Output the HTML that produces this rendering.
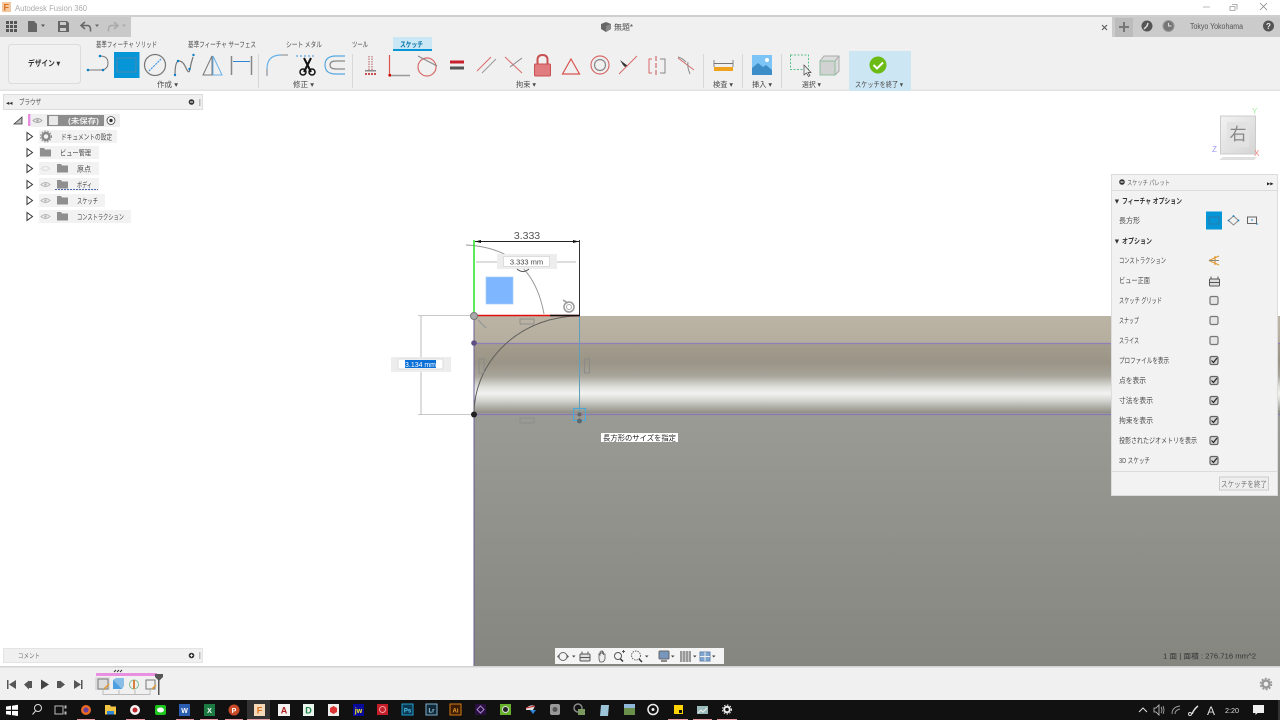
<!DOCTYPE html>
<html lang="ja"><head><meta charset="utf-8"><title>Autodesk Fusion 360</title>
<style>
html,body{margin:0;padding:0;width:1280px;height:720px;overflow:hidden;background:#fff}
svg{display:block;position:absolute;left:0;top:0;filter:blur(.3px)}
text{font-family:"Liberation Sans","Noto Sans CJK JP",sans-serif;font-size:7.5px;fill:#4a4a4a}
.c{text-anchor:middle}
.b{font-weight:bold}
</style></head><body>
<svg width="1280" height="720" viewBox="0 0 1280 720" xmlns="http://www.w3.org/2000/svg">
<defs>
<linearGradient id="band" x1="0" y1="0" x2="0" y2="1">
<stop offset="0" stop-color="#bbb4a4"/><stop offset=".27" stop-color="#b5ae9f"/><stop offset=".29" stop-color="#a49d8e"/><stop offset=".48" stop-color="#9a9486"/><stop offset=".62" stop-color="#a8a59b"/><stop offset=".73" stop-color="#dedfdb"/><stop offset=".8" stop-color="#f2f2f0"/><stop offset=".87" stop-color="#d4d4d0"/><stop offset="1" stop-color="#8e8e86"/>
</linearGradient>
<linearGradient id="floor" x1="0" y1="0" x2="0" y2="1"><stop offset="0" stop-color="#9b9b95"/><stop offset="1" stop-color="#85867f"/></linearGradient>
<linearGradient id="cube" x1="0" y1="0" x2="1" y2="1"><stop offset="0" stop-color="#f2f2f2"/><stop offset="1" stop-color="#d4d4d4"/></linearGradient>
</defs>

<!-- title bar -->
<rect width="1280" height="15" fill="#fff"/>
<rect x="2" y="2" width="9" height="10" fill="#f4c9a0"/><text x="3.500" y="10.500" class="b" style="font-size:9px;fill:#d9701c">F</text>
<text x="15" y="11" textLength="72" lengthAdjust="spacingAndGlyphs" style="font-size:8.500px;fill:#aaa">Autodesk Fusion 360</text>
<path d="M1203 7h7" stroke="#bbb" fill="none"/><path d="M1232 4.500h5v5M1230 6.500h5v4h-5z" stroke="#999" fill="none" stroke-width=".8"/><path d="M1260 3l7 7M1267 3l-7 7" stroke="#888" fill="none" stroke-width=".8"/>
<rect y="15" width="1280" height="2" fill="#cfcfcf"/>

<!-- tab bar -->
<rect y="17" width="1280" height="20" fill="#f0f0f0"/>
<rect y="17" width="131" height="20" fill="#c9c9c9"/>
<rect x="1112" y="17" width="168" height="20" fill="#cbcbcb"/>
<rect x="1115" y="18" width="18" height="19" fill="#bcbcbc"/>
<g fill="#555"><rect x="6" y="21" width="3" height="3"/><rect x="10" y="21" width="3" height="3"/><rect x="14" y="21" width="3" height="3"/><rect x="6" y="25" width="3" height="3"/><rect x="10" y="25" width="3" height="3"/><rect x="14" y="25" width="3" height="3"/><rect x="6" y="29" width="3" height="3"/><rect x="10" y="29" width="3" height="3"/><rect x="14" y="29" width="3" height="3"/></g>
<path d="M28 21h6l3 3v8h-9z" fill="#666"/><path d="M41 24.500h4l-2 2.500z" fill="#555"/>
<path d="M58 21h9l2 2v9H58z" fill="#666"/><rect x="60" y="22" width="6" height="3" fill="#ccc"/><rect x="60" y="28" width="6" height="3" fill="#ccc"/>
<path d="M85 22l-4 3.500 4 3.500M81.500 25.500h6q3 0 3 4v2" fill="none" stroke="#666" stroke-width="1.500"/><path d="M95 24.500h4l-2 2.500z" fill="#666"/>
<path d="M114 22l4 3.500-4 3.500M117.500 25.500h-6q-3 0-3 4v2" fill="none" stroke="#aaa" stroke-width="1.500"/><path d="M122 24.500h4l-2 2.500z" fill="#aaa"/>
<path d="M601 24l5-2 5 2v5l-5 3-5-3z" fill="#666"/><path d="M606 26v6l5-3v-5z" fill="#888"/>
<text x="614" y="30" textLength="19" lengthAdjust="spacingAndGlyphs" style="font-size:8px">無題*</text>
<path d="M1102 25l5 5M1107 25l-5 5" stroke="#555" stroke-width="1" fill="none"/>
<path d="M1124 22v10M1119 27h10" stroke="#777" stroke-width="2" fill="none"/>
<circle cx="1147" cy="26" r="5.500" fill="#555"/><path d="M1144 29l3-3 1-3" stroke="#ddd" stroke-width="1.500" fill="none"/>
<circle cx="1168.500" cy="26" r="5.500" fill="#777" stroke="#999"/><path d="M1168.500 23v3h3" stroke="#ddd" fill="none"/>
<text x="1190" y="29" textLength="53" lengthAdjust="spacingAndGlyphs" style="font-size:8px;fill:#555">Tokyo Yokohama</text>
<circle cx="1268.500" cy="26" r="5.500" fill="#555"/><text x="1268.500" y="29" class="c b" style="font-size:8px;fill:#eee">?</text>

<!-- toolbar -->
<rect y="37" width="1280" height="53" fill="#f0f0f0"/>
<rect y="89.500" width="1280" height="1.500" fill="#e2e2e2"/>
<text x="96" y="47" textLength="61" lengthAdjust="spacingAndGlyphs">基準フィーチャ ソリッド</text>
<text x="188" y="47" textLength="68" lengthAdjust="spacingAndGlyphs">基準フィーチャ サーフェス</text>
<text x="286" y="47" textLength="36" lengthAdjust="spacingAndGlyphs">シート メタル</text>
<text x="352" y="47" textLength="16" lengthAdjust="spacingAndGlyphs">ツール</text>
<rect x="393" y="37" width="39" height="14" fill="#c9e7f5"/><rect x="393" y="49" width="39" height="2" fill="#0696d7"/>
<text x="400" y="47" textLength="23" lengthAdjust="spacingAndGlyphs" class="b" style="fill:#0671a8">スケッチ</text>
<rect x="8.500" y="44.500" width="72" height="39" rx="3" fill="#f1f1f1" stroke="#dcdcdc"/>
<text x="28" y="66" textLength="32" lengthAdjust="spacingAndGlyphs" class="b" style="font-size:8px;fill:#333">デザイン ▾</text>

<!-- create icons -->
<path d="M88 70h12q8 0 8-7t-8-7" fill="none" stroke="#777"/><circle cx="88" cy="70" r="1.300" fill="#0b7fc8"/><circle cx="103" cy="70" r="1.300" fill="#0b7fc8"/><circle cx="100" cy="56" r="1.300" fill="#0b7fc8"/>
<rect x="114" y="52" width="25.500" height="26" fill="#0696d7"/><rect x="117" y="58" width="19" height="14" fill="none" stroke="#4a8bb0"/>
<circle cx="155" cy="65" r="10.500" fill="none" stroke="#777" stroke-width="1.200"/><path d="M149 71l12-12" stroke="#3d95e0" stroke-width="1.200" stroke-dasharray="2 1"/>
<path d="M175 75q0-14 4-14t7 7 4 1 3-12" fill="none" stroke="#777" stroke-width="1.200"/><circle cx="178" cy="61" r="1.200" fill="#0b7fc8"/><circle cx="189.500" cy="69" r="1.200" fill="#0b7fc8"/><circle cx="193.500" cy="55" r="1.200" fill="#0b7fc8"/><circle cx="175" cy="75" r="1.200" fill="#0b7fc8"/>
<path d="M203 75l9-19v19z" fill="none" stroke="#777"/><path d="M213 56l9 19h-9z" fill="none" stroke="#6ab2e8"/>
<path d="M231.500 56v19M251.500 56v19" stroke="#888" stroke-width="1.500"/><path d="M233 61.500h17" stroke="#2f86d6" stroke-width="1"/>
<text x="157" y="87" textLength="21" lengthAdjust="spacingAndGlyphs">作成 ▾</text>
<rect x="258" y="54" width="1" height="34" fill="#d8d8d8"/>
<path d="M267 75v-6q0-14 14-14" fill="none" stroke="#6ab2e8" stroke-width="1.200"/><path d="M281 55h7M267 69v7" stroke="#999" stroke-width="1.200"/>
<path d="M296 56h20" stroke="#3d95e0" stroke-dasharray="2 2"/><path d="M304 58l7 14M311 58l-7 14" stroke="#111" stroke-width="2"/><circle cx="303" cy="72" r="3" fill="none" stroke="#111" stroke-width="1.500"/><circle cx="312" cy="72" r="3" fill="none" stroke="#111" stroke-width="1.500"/>
<path d="M345 56h-9q-11 0-11 9t11 9h9" fill="none" stroke="#5aa8e0" stroke-width="1.200"/><path d="M345 61h-9q-6 0-6 4t6 4h9" fill="none" stroke="#888" stroke-width="1.200"/>
<text x="293" y="87" textLength="21" lengthAdjust="spacingAndGlyphs">修正 ▾</text>
<rect x="352" y="54" width="1" height="34" fill="#d8d8d8"/>

<!-- constraints -->
<path d="M369 56v14M372 56v14" stroke="#b05a5a" stroke-dasharray="1.500 1"/><rect x="365" y="70" width="11" height="1.500" fill="#888"/><path d="M365 74h11" stroke="#c85050" stroke-dasharray="2 1" stroke-width="2"/>
<path d="M389.500 55v20" stroke="#d9534f" stroke-width="1.200"/><path d="M390 75.500h20" stroke="#999" stroke-width="1.500"/><rect x="388.500" y="74" width="2.500" height="2.500" fill="#c00"/>
<circle cx="427" cy="67" r="9" fill="none" stroke="#d96a6a" stroke-width="1.200"/><path d="M418 56l19 10" stroke="#888"/>
<rect x="450" y="60.500" width="14" height="3" fill="#c8202c"/><rect x="450" y="66.500" width="14" height="3" fill="#555"/>
<path d="M477 71l14-14" stroke="#d96a6a" stroke-width="1"/><path d="M482 73l14-14" stroke="#999" stroke-width="1"/>
<path d="M505 57l17 16" stroke="#d96a6a"/><path d="M510 67l12-9" stroke="#888"/>
<rect x="534.500" y="64" width="16" height="12" rx="1" fill="#e07c80" stroke="#c85050"/><path d="M537.500 64v-4q0-5 5-5t5 5v4" fill="none" stroke="#c85050" stroke-width="2"/>
<path d="M571 59l8.500 15h-17z" fill="none" stroke="#d9534f" stroke-width="1.200"/>
<circle cx="600" cy="65" r="9" fill="none" stroke="#d96a6a" stroke-width="1.200"/><circle cx="600" cy="65" r="5.500" fill="none" stroke="#888" stroke-width="1.200"/>
<path d="M620 60l8 6-3 1-2-2z" fill="#333"/><path d="M619 74l18-18" stroke="#d96a6a"/>
<path d="M652 59h-3v14h3" stroke="#d96a6a" fill="none"/><path d="M660 59h5v14h-5" stroke="#888" fill="none"/><path d="M656 56v21" stroke="#c85050" stroke-dasharray="5 2"/>
<path d="M678 58l16 12" stroke="#d96a6a"/><path d="M688 62q-1 5 2 12" stroke="#888" fill="none"/><path d="M678 57q4 1 8 5" stroke="#888" fill="none"/>
<text x="516" y="87" textLength="20" lengthAdjust="spacingAndGlyphs">拘束 ▾</text>
<rect x="703" y="54" width="1" height="34" fill="#d8d8d8"/>
<path d="M714 60v7M733 60v7" stroke="#888"/><path d="M714 63.500h19" stroke="#777"/><rect x="714" y="67" width="19" height="4" fill="#efa21e"/>
<text x="713" y="87" textLength="20" lengthAdjust="spacingAndGlyphs">検査 ▾</text>
<rect x="742" y="54" width="1" height="34" fill="#d8d8d8"/>
<rect x="752" y="55" width="20" height="20" fill="#7cc4f5"/><path d="M752 75v-7l6-5 5 4 3-2 6 5v5z" fill="#3d8ec8"/><circle cx="767" cy="60" r="2" fill="#fff"/>
<text x="752" y="87" textLength="20" lengthAdjust="spacingAndGlyphs">挿入 ▾</text>
<rect x="781" y="54" width="1" height="34" fill="#d8d8d8"/>
<rect x="790.500" y="55" width="18" height="14.500" fill="none" stroke="#5cc08a" stroke-dasharray="2 1.500"/>
<path d="M804 65v10l2.500-2 2 3.500 1.500-1-2-3h3z" fill="#eee" stroke="#444" stroke-width=".7"/>
<path d="M820 61l4-5h15v15l-4 4h-15z" fill="#ddd" stroke="#aaa"/><rect x="820" y="61" width="15" height="14" fill="#d2d2d2" stroke="#8fbf9f"/><path d="M835 61l4-5" stroke="#aaa"/>
<text x="802" y="87" textLength="19" lengthAdjust="spacingAndGlyphs">選択 ▾</text>
<rect x="849" y="51" width="62" height="40" fill="#cce6f4"/>
<circle cx="878" cy="65" r="8.500" fill="#6cbb14"/><path d="M873.500 65l3.500 3.500 6-6" stroke="#fff" stroke-width="2" fill="none"/>
<text x="855" y="87" textLength="48" lengthAdjust="spacingAndGlyphs">スケッチを終了 ▾</text>

<!-- canvas -->
<rect y="91" width="1280" height="575" fill="#fff"/>
<rect x="474" y="316" width="806" height="97" fill="url(#band)"/>
<rect x="474" y="413" width="806" height="253" fill="url(#floor)"/>
<!-- sketch lines -->
<path d="M474 343.500h806" stroke="#8f7fb8" stroke-width="1.200"/><path d="M474 414.500h806" stroke="#8678b0" stroke-width="1.200"/>
<path d="M474 240v426" stroke="#6b5c96" stroke-width="1"/>
<path d="M474 414A105 98 0 0 1 579 316" fill="none" stroke="#5f5f5a" stroke-width="1"/>
<path d="M466 245Q532 248 544 314" fill="none" stroke="#999" stroke-width="1"/>
<path d="M579.500 316v99" stroke="#5f9fbd" stroke-width="1"/>
<path d="M474 240v76" stroke="#27e227" stroke-width="1.500"/>
<path d="M474 315.500h105" stroke="#e01010" stroke-width="1.500"/><path d="M550 315.500h30" stroke="#111" stroke-width="1.500"/>
<path d="M579.500 240v75" stroke="#333" stroke-width="1"/>
<path d="M475 241.500h104" stroke="#222" stroke-width="1"/><path d="M475 241.500l6-1.500v3zM579 241.500l-6-1.500v3z" fill="#111"/>
<text x="527" y="239" class="c" style="font-size:10.500px;fill:#555">3.333</text>
<path d="M476 262h100" stroke="#bbb" stroke-width="1"/>
<rect x="497" y="254" width="60" height="15" fill="#ededed"/><rect x="503.500" y="256.500" width="46" height="10" fill="#fff" stroke="#ddd"/>
<text x="526.500" y="264.500" class="c" style="font-size:7.500px;fill:#444">3.333 mm</text>
<path d="M517 269q6 5 12 0" fill="none" stroke="#555" stroke-width="1"/>
<rect x="486" y="277" width="27" height="27" fill="#7eb6ff" stroke="#a6cdfa" stroke-width=".7"/>
<circle cx="569" cy="307" r="5" fill="none" stroke="#999" stroke-width="1.500"/><circle cx="569" cy="307" r="2.500" fill="none" stroke="#aaa"/><path d="M563 300l5 3" stroke="#999" stroke-width="1.500"/>
<path d="M418 315.500h56M418 414.500h56" stroke="#c9c9c9" stroke-width="1"/>
<path d="M421 316v99" stroke="#bbb" stroke-width="1"/>
<rect x="391" y="357" width="60" height="15" fill="#ededed"/><rect x="398" y="359" width="45" height="10" fill="#fff" stroke="#ddd"/>
<rect x="405" y="360" width="31" height="8" fill="#0a6fd6"/><text x="405" y="367" textLength="31" lengthAdjust="spacingAndGlyphs" style="font-size:7.500px;fill:#fff">3.134 mm</text>
<circle cx="474" cy="316" r="3.500" fill="#aaa" stroke="#777"/><path d="M478 320l8 8" stroke="#999" stroke-width="1.500"/>
<circle cx="474" cy="343" r="2.800" fill="#5f4f86"/><circle cx="474" cy="414.500" r="3" fill="#222"/>
<g fill="none" stroke="#888" stroke-width=".8"><rect x="520" y="319" width="14" height="5"/><rect x="520" y="418" width="14" height="5"/><rect x="479" y="359" width="5" height="14"/><rect x="584.500" y="359" width="5" height="14"/></g>
<rect x="573.500" y="408.500" width="12" height="12" fill="none" stroke="#45a9dc"/><circle cx="579.500" cy="414.500" r="2" fill="#666"/><circle cx="579.500" cy="421" r="2.500" fill="#5a6a70"/>
<rect x="601" y="433" width="77" height="9" fill="#fff"/><text x="603" y="440.500" textLength="73" lengthAdjust="spacingAndGlyphs" style="font-size:7.500px;fill:#222">長方形のサイズを指定</text>

<!-- browser -->
<rect x="3.500" y="94.500" width="199" height="15" fill="#f0f0f0" stroke="#ddd"/>
<text x="6" y="105" style="font-size:6.500px;fill:#333">◂◂</text><text x="19" y="104.500" textLength="22" lengthAdjust="spacingAndGlyphs">ブラウザ</text><circle cx="191.500" cy="102" r="2.800" fill="#333"/><rect x="190" y="101.500" width="3" height="1" fill="#fff"/><rect x="199" y="99" width="1.500" height="7" fill="#bbb"/>
<path d="M14 124l8-7v7z" fill="#bbb" stroke="#333" stroke-width=".8"/>
<rect x="28" y="114" width="2.500" height="12" fill="#e58ee0"/>
<rect x="31" y="114" width="89" height="13" fill="#efefef"/><rect x="47" y="115" width="57" height="11" fill="#8d8d8d"/>
<path d="M33 120.500q4.500-4 9 0q-4.500 4-9 0z" fill="none" stroke="#aaa"/><circle cx="37.500" cy="120.500" r="1.300" fill="#aaa"/>
<rect x="49" y="116" width="9" height="9" rx="1" fill="#e8e8e8"/><text x="68" y="123.500" textLength="31" lengthAdjust="spacingAndGlyphs" class="b" style="fill:#eee">(未保存)</text>
<circle cx="111" cy="120.500" r="4" fill="#fff" stroke="#444" stroke-width=".8"/><circle cx="111" cy="120.500" r="1.700" fill="#333"/>
<g fill="#f2f2f2"><rect x="39" y="130" width="78" height="13"/><rect x="39" y="146" width="60" height="13"/><rect x="39" y="162" width="60" height="13"/><rect x="39" y="178" width="60" height="13"/><rect x="39" y="194" width="66" height="13"/><rect x="39" y="210" width="92" height="13"/></g>
<g fill="#fff" stroke="#333" stroke-width="1"><path d="M27 132.500l5.500 4-5.500 4z"/><path d="M27 148.500l5.500 4-5.500 4z"/><path d="M27 164.500l5.500 4-5.500 4z"/><path d="M27 180.500l5.500 4-5.500 4z"/><path d="M27 196.500l5.500 4-5.500 4z"/><path d="M27 212.500l5.500 4-5.500 4z"/></g>
<circle cx="46" cy="136.500" r="3.500" fill="none" stroke="#888" stroke-width="2.500"/><circle cx="46" cy="136.500" r="5.500" fill="none" stroke="#888" stroke-width="1" stroke-dasharray="1.500 1.500"/>
<g fill="#8f8f8f"><path d="M40 148h4l1 1.500h6v7H40z"/><path d="M57 164h4l1 1.500h6v7H57z"/><path d="M57 180h4l1 1.500h6v7H57z"/><path d="M57 196h4l1 1.500h6v7H57z"/><path d="M57 212h4l1 1.500h6v7H57z"/></g>
<g fill="none" stroke="#bbb"><path d="M41 168.500q4.500-4 9 0q-4.500 4-9 0z" stroke="#ddd"/><path d="M41 184.500q4.500-4 9 0q-4.500 4-9 0z"/><path d="M41 200.500q4.500-4 9 0q-4.500 4-9 0z"/><path d="M41 216.500q4.500-4 9 0q-4.500 4-9 0z"/></g>
<g fill="#bbb"><circle cx="45.500" cy="184.500" r="1.300"/><circle cx="45.500" cy="200.500" r="1.300"/><circle cx="45.500" cy="216.500" r="1.300"/></g>
<path d="M55 189.500h43" stroke="#4a68b0" stroke-dasharray="2 1" stroke-width="1"/>
<text x="61" y="139.500" textLength="51" lengthAdjust="spacingAndGlyphs">ドキュメントの設定</text><text x="60" y="155.500" textLength="31" lengthAdjust="spacingAndGlyphs">ビュー管理</text><text x="77" y="171.500" textLength="14" lengthAdjust="spacingAndGlyphs">原点</text><text x="77" y="187.500" textLength="15" lengthAdjust="spacingAndGlyphs">ボディ</text><text x="77" y="203.500" textLength="21" lengthAdjust="spacingAndGlyphs">スケッチ</text><text x="77" y="219.500" textLength="47" lengthAdjust="spacingAndGlyphs">コンストラクション</text>

<!-- comment bar -->
<rect x="3.500" y="648.500" width="199" height="14" fill="#f0f0f0" stroke="#e4e4e4"/>
<text x="18" y="658" textLength="22" lengthAdjust="spacingAndGlyphs" style="font-size:7px;fill:#777">コメント</text><circle cx="191.500" cy="655.500" r="2.800" fill="#333"/><path d="M190 655.500h3M191.500 654v3" stroke="#fff" stroke-width=".8"/><rect x="199" y="652" width="1.500" height="7" fill="#bbb"/>

<!-- view cube -->
<path d="M1219 160l4-3h34l-3 3z" fill="#ccc" opacity=".6"/>
<rect x="1220.500" y="116" width="35" height="38" fill="url(#cube)" stroke="#ccc"/>
<rect x="1227" y="122" width="22" height="25" fill="#e2e2e2"/>
<text x="1238" y="140" class="c" style="font-size:17px;fill:#888">右</text>
<text x="1252" y="114" style="font-size:8px;fill:#9fef9f">Y</text><text x="1212" y="152" style="font-size:8px;fill:#9a9af5">Z</text><text x="1254" y="156" style="font-size:8px;fill:#f08080">X</text>

<!-- palette -->
<rect x="1111.500" y="174.500" width="166" height="321" fill="#f2f2f2" stroke="#dcdcdc"/>
<path d="M1112 190.500h165" stroke="#dcdcdc"/>
<circle cx="1122" cy="182" r="2.800" fill="#333"/><rect x="1120.500" y="181.500" width="3" height="1" fill="#fff"/>
<text x="1127" y="185" textLength="43" lengthAdjust="spacingAndGlyphs" style="font-size:7px;fill:#666">スケッチ パレット</text><text x="1267" y="185.500" style="font-size:6.500px;fill:#222">▸▸</text>
<text x="1115" y="203.500" class="b" style="fill:#333">▾</text><text x="1122" y="203.500" textLength="60" lengthAdjust="spacingAndGlyphs" class="b" style="fill:#333">フィーチャ オプション</text>
<text x="1119" y="223" textLength="21" lengthAdjust="spacingAndGlyphs">長方形</text>
<rect x="1206" y="211.500" width="16" height="18" fill="#0696d7"/><rect x="1209" y="217" width="10" height="7" fill="none" stroke="#2a7ca8"/>
<path d="M1233.500 216l5 4.500-5 4.500-5-4.500z" fill="none" stroke="#888"/><circle cx="1233.500" cy="216" r=".9" fill="#0b7fc8"/><circle cx="1238.500" cy="220.500" r=".9" fill="#0b7fc8"/><circle cx="1228.500" cy="220.500" r=".9" fill="#0b7fc8"/>
<rect x="1247.500" y="217" width="9" height="6.500" fill="none" stroke="#666"/><circle cx="1252" cy="220" r=".8" fill="#0b7fc8"/><circle cx="1257" cy="224" r=".8" fill="#0b7fc8"/>
<text x="1115" y="243.500" class="b" style="fill:#333">▾</text><text x="1122" y="243.500" textLength="30" lengthAdjust="spacingAndGlyphs" class="b" style="fill:#333">オプション</text>
<text x="1119" y="263" textLength="47" lengthAdjust="spacingAndGlyphs">コンストラクション</text>
<path d="M1209 260.500l10-4.500M1209 260.500l10 4.500M1215 256v9" stroke="#e09a30" stroke-width="1.200"/><path d="M1209 260.500h10" stroke="#888"/>
<text x="1119" y="283" textLength="31" lengthAdjust="spacingAndGlyphs">ビュー正面</text>
<rect x="1209.500" y="279" width="10" height="7" rx="1" fill="#ddd" stroke="#555"/><path d="M1211 279v-2.500M1218 279v-2.500" stroke="#555"/><path d="M1210 282.500h9" stroke="#555"/>
<g fill="#e6e6e6" stroke="#777" stroke-width="1.200"><rect x="1210" y="296.500" width="8" height="8" rx="1.500"/><rect x="1210" y="316.500" width="8" height="8" rx="1.500"/><rect x="1210" y="336.500" width="8" height="8" rx="1.500"/></g>
<g fill="#d4d4d4" stroke="#666" stroke-width="1.200"><rect x="1210" y="356.500" width="8" height="8" rx="1.500"/><rect x="1210" y="376.500" width="8" height="8" rx="1.500"/><rect x="1210" y="396.500" width="8" height="8" rx="1.500"/><rect x="1210" y="416.500" width="8" height="8" rx="1.500"/><rect x="1210" y="436.500" width="8" height="8" rx="1.500"/><rect x="1210" y="456.500" width="8" height="8" rx="1.500"/></g>
<g fill="none" stroke="#222" stroke-width="1.200"><path d="M1211.500 360.500l2 2 3.500-4.500"/><path d="M1211.500 380.500l2 2 3.500-4.500"/><path d="M1211.500 400.500l2 2 3.500-4.500"/><path d="M1211.500 420.500l2 2 3.500-4.500"/><path d="M1211.500 440.500l2 2 3.500-4.500"/><path d="M1211.500 460.500l2 2 3.500-4.500"/></g>
<text x="1119" y="303" textLength="43" lengthAdjust="spacingAndGlyphs">スケッチ グリッド</text><text x="1119" y="323" textLength="20" lengthAdjust="spacingAndGlyphs">スナップ</text><text x="1119" y="343" textLength="20" lengthAdjust="spacingAndGlyphs">スライス</text><text x="1119" y="363" textLength="50" lengthAdjust="spacingAndGlyphs">プロファイルを表示</text><text x="1119" y="383" textLength="27" lengthAdjust="spacingAndGlyphs">点を表示</text><text x="1119" y="403" textLength="34" lengthAdjust="spacingAndGlyphs">寸法を表示</text><text x="1119" y="423" textLength="34" lengthAdjust="spacingAndGlyphs">拘束を表示</text><text x="1119" y="443" textLength="78" lengthAdjust="spacingAndGlyphs">投影されたジオメトリを表示</text><text x="1119" y="463" textLength="31" lengthAdjust="spacingAndGlyphs">3D スケッチ</text>
<path d="M1112 471.500h165" stroke="#dcdcdc"/>
<rect x="1219.500" y="477" width="49" height="13" fill="#eee" stroke="#ccc"/><text x="1221" y="487" textLength="46" lengthAdjust="spacingAndGlyphs" style="fill:#777;font-size:8px">スケッチを終了</text>

<!-- nav bar -->
<rect x="555" y="648" width="169" height="16" fill="#f4f4f4"/>
<circle cx="563" cy="656.500" r="4" fill="none" stroke="#666"/><path d="M557 656.500l2-2v4zM569 656.500l-2-2v4z" fill="#666"/><path d="M572 655.500h3.500l-1.700 2z" fill="#444"/>
<rect x="580" y="654" width="10" height="7" rx="1" fill="#ddd" stroke="#555"/><path d="M582 654v-2.500M588 654v-2.500M580 657.500h10" stroke="#555"/>
<path d="M599 659v-5l1 1v-3h1v2-3h1.500v3-2h1v3-1h1.500v5q-1 3-3 3h-2z" fill="#eee" stroke="#555" stroke-width=".8"/>
<circle cx="618" cy="656" r="3.500" fill="none" stroke="#555" stroke-width="1"/><path d="M620.500 659l2.500 2.500" stroke="#333" stroke-width="1.500"/><path d="M622 651.500h3M623.500 650v3" stroke="#555"/>
<circle cx="636" cy="655.500" r="4.500" fill="none" stroke="#666" stroke-dasharray="1.500 1"/><path d="M639 659l3 3" stroke="#333" stroke-width="1.500"/><path d="M645 655.500h3.500l-1.700 2z" fill="#444"/>
<rect x="659" y="651" width="10" height="8" rx="1" fill="#7796bb" stroke="#666"/><path d="M661 661h6" stroke="#666" stroke-width="1.500"/><path d="M671 655.500h3.500l-1.700 2z" fill="#444"/>
<rect x="680" y="651" width="11" height="11" fill="#999"/><path d="M682.500 651v11M685.500 651v11M688.500 651v11" stroke="#ddd" stroke-width=".7"/><path d="M693 655.500h3.500l-1.700 2z" fill="#444"/>
<rect x="700" y="652" width="10" height="9" fill="#7fa5cf" stroke="#6285ad"/><path d="M705 652v9M700 656.500h10" stroke="#eee"/><path d="M712 655.500h3.500l-1.700 2z" fill="#444"/>
<text x="1163" y="658.500" textLength="93" lengthAdjust="spacingAndGlyphs" style="font-size:7px;fill:#333">1 面 | 面積 : 276.716 mm^2</text>

<!-- timeline -->
<rect y="666" width="1280" height="1.500" fill="#d2d2d2"/>
<rect y="667.500" width="1280" height="32.500" fill="#f0f0f0"/>
<g fill="#555"><rect x="7" y="680" width="1.500" height="9"/><path d="M16 680v9l-7-4.500z"/><path d="M24 684.500l5-4v9zM29 681h3v7h-3z"/><path d="M41 679.500l8 5-8 5z" fill="#444"/><path d="M57 681h3v7h-3zM60 680.500l5 4-5 4z"/><path d="M74 680v9l7-4.500z"/><rect x="81" y="680" width="1.500" height="9"/></g>
<rect x="96" y="673" width="61" height="3" fill="#e88fe0"/>
<path d="M114 672l2-2M117 672l2-2M120 672l2-2" stroke="#333"/>
<rect x="95" y="677" width="15" height="13" fill="#ddd"/>
<rect x="98" y="679" width="10" height="10" fill="none" stroke="#777"/><path d="M104 689l5-5" stroke="#e09a30" stroke-width="1.500"/>
<rect x="113" y="680" width="9" height="9" fill="#4c9fe0"/><path d="M113 680l3-2h8v8l-2 3z" fill="#88bde8"/>
<circle cx="134" cy="684.500" r="4.500" fill="none" stroke="#7fbf8f"/><path d="M134 680v9" stroke="#d98040" stroke-width="2"/>
<rect x="146" y="680" width="9" height="9" fill="none" stroke="#777"/><path d="M152 689l4-4" stroke="#e09a30" stroke-width="1.500"/>
<path d="M103 690v4.500h47v-4.500M119 690v4.500M135 690v4.500" fill="none" stroke="#bbb"/>
<path d="M155 674h8v3l-4 4-4-4z" fill="#555"/><rect x="158" y="678" width="1.500" height="17" fill="#555"/>
<circle cx="1266" cy="684" r="3.500" fill="none" stroke="#999" stroke-width="2.500"/><circle cx="1266" cy="684" r="5.500" fill="none" stroke="#999" stroke-width="1.500" stroke-dasharray="2 1.500"/>

<!-- taskbar -->
<rect y="700" width="1280" height="20" fill="#111"/>
<rect x="247" y="700" width="23" height="20" fill="#333"/>
<path d="M6 706.500l5-.7v4h-5zM12 705.700l6-.9v5h-6zM6 711h5v4l-5-.7zM12 711h6v5l-6-.9z" fill="#fff"/>
<circle cx="38" cy="708" r="3.500" fill="none" stroke="#ddd"/><path d="M35.500 711l-3 3.500" stroke="#ddd"/>
<path d="M55 706h8v8h-8zM65 706h1v2h-1zM65 712h1v2h-1z" fill="none" stroke="#bbb"/>
<circle cx="86" cy="710" r="5" fill="#e66a25"/><circle cx="86" cy="710" r="2.500" fill="#6b3fa0"/>
<path d="M105 705h5l1 1.500h5v8h-11z" fill="#f4c542"/><rect x="107" y="711" width="7" height="3.500" fill="#2f86d6"/>
<circle cx="135" cy="710" r="5" fill="#f4f4f4"/><circle cx="135" cy="710" r="2.500" fill="#c0272d"/>
<rect x="155" y="705" width="11" height="10" rx="2" fill="#1ec71e"/><ellipse cx="160.500" cy="710" rx="3.500" ry="2.500" fill="#fff"/>
<rect x="179" y="704" width="11" height="12" fill="#2b5eb0"/><text x="184.500" y="713" class="c b" style="font-size:7px;fill:#fff">W</text>
<rect x="204" y="704" width="11" height="12" fill="#1c7a43"/><text x="209.500" y="713" class="c b" style="font-size:7px;fill:#fff">X</text>
<circle cx="234" cy="710" r="5.500" fill="#c94a27"/><text x="234" y="713" class="c b" style="font-size:7px;fill:#fff">P</text>
<rect x="254" y="704" width="11" height="12" fill="#f6d9b8"/><text x="259.500" y="713.500" class="c b" style="font-size:9px;fill:#d9701c">F</text>
<rect x="278" y="704" width="12" height="12" fill="#f2f2f2"/><text x="284" y="713.500" class="c b" style="font-size:9px;fill:#b01c20">A</text>
<rect x="303" y="704" width="11" height="12" fill="#e8f4ec"/><text x="308.500" y="713.500" class="c b" style="font-size:9px;fill:#1c8048">D</text>
<rect x="328" y="704" width="11" height="12" fill="#eee"/><path d="M330 708l3.500-2 3.500 2v4l-3.500 2-3.500-2z" fill="#d33"/>
<rect x="353" y="704" width="11" height="12" fill="#0a0a9a"/><text x="358.500" y="713" class="c b" style="font-size:7px;fill:#f4f020">jw</text>
<rect x="377" y="704" width="11" height="11" fill="#c41e2a"/><circle cx="382.500" cy="709.500" r="3" fill="none" stroke="#f4a0a0"/>
<rect x="402" y="704" width="11" height="11" fill="#0b3850" stroke="#1f9fd0"/><text x="407.500" y="712.500" class="c b" style="font-size:6px;fill:#4cc4f0">Ps</text>
<rect x="426" y="704" width="11" height="11" fill="#102838" stroke="#80b0cc"/><text x="431.500" y="712.500" class="c b" style="font-size:6px;fill:#a0d0ec">Lr</text>
<rect x="450" y="704" width="11" height="11" fill="#3a1c04" stroke="#d87a14"/><text x="455.500" y="712.500" class="c b" style="font-size:6px;fill:#f09a30">Ai</text>
<rect x="475" y="704" width="11" height="11" fill="#2a1040"/><path d="M480.500 706l3.500 3.500-3.500 3.500-3.500-3.500z" fill="none" stroke="#a888d0"/>
<rect x="500" y="704" width="11" height="11" fill="#66b02a"/><circle cx="505.500" cy="709.500" r="3" fill="#222" stroke="#ddd"/>
<path d="M526 708q5-4 9-2l-2 4h-7z" fill="#ddd"/><path d="M530 710h6l-3 4z" fill="#2f86d6"/><path d="M526 708l9-2" stroke="#c22"/>
<rect x="550" y="704" width="10" height="11" rx="2" fill="#999"/><circle cx="555" cy="709.500" r="2.500" fill="#555"/>
<circle cx="578" cy="708" r="4" fill="none" stroke="#888" stroke-width="1.500"/><rect x="578" y="709" width="7" height="6" fill="#7c9a60"/>
<path d="M601 705h8l-1 11h-8z" fill="#9cc4d8"/>
<rect x="624" y="704" width="11" height="11" fill="#6a8f4a"/><rect x="624" y="704" width="11" height="4" fill="#8fb8d8"/>
<circle cx="653" cy="709.500" r="5" fill="none" stroke="#eee" stroke-width="1.500"/><circle cx="653" cy="709.500" r="1.500" fill="#eee"/>
<rect x="674" y="705" width="9" height="9" fill="#ffd400"/><rect x="679" y="710" width="3" height="3" fill="#111"/>
<rect x="697" y="706" width="11" height="8" fill="#9bb"/><path d="M698 713l3-3 2 2 4-4" stroke="#eee" fill="none"/>
<circle cx="727" cy="709.500" r="2.800" fill="none" stroke="#eee" stroke-width="2"/><circle cx="727" cy="709.500" r="4.500" fill="none" stroke="#eee" stroke-width="1" stroke-dasharray="1.500 1.500"/>
<g fill="#e89aa4"><rect x="77" y="719" width="18" height="1"/><rect x="126" y="719" width="19" height="1"/><rect x="176" y="719" width="18" height="1"/><rect x="200" y="719" width="18" height="1"/><rect x="225" y="719" width="18" height="1"/><rect x="247" y="719" width="23" height="1"/><rect x="668" y="719" width="20" height="1"/><rect x="693" y="719" width="19" height="1"/><rect x="717" y="719" width="20" height="1"/></g>
<path d="M1139 712l4-4 4 4" stroke="#ddd" fill="none"/><path d="M1154 708h2l3-3v10l-3-3h-2z" fill="none" stroke="#ccc" stroke-width=".8"/><path d="M1161 707q2 3 0 6M1163 706q2 4 0 8" stroke="#ccc" fill="none" stroke-width=".7"/>
<path d="M1172 714q0-7 8-8M1175 714q0-4 5-5" stroke="#999" fill="none"/>
<path d="M1198 706q-4 3-6 8" stroke="#ddd" stroke-width="1.500" fill="none"/><circle cx="1190" cy="714" r="1.500" fill="none" stroke="#ddd"/>
<text x="1207" y="715" style="font-size:12px;fill:#ddd">A</text>
<text x="1225" y="713" textLength="14" lengthAdjust="spacingAndGlyphs" style="font-size:7.500px;fill:#ddd">2:20</text>
<path d="M1253 705h11v8h-6.500l-2 2v-2h-2.500z" fill="#eee"/>
<rect x="1278" y="700" width="2" height="20" fill="#333"/>
</svg>
</body></html>
